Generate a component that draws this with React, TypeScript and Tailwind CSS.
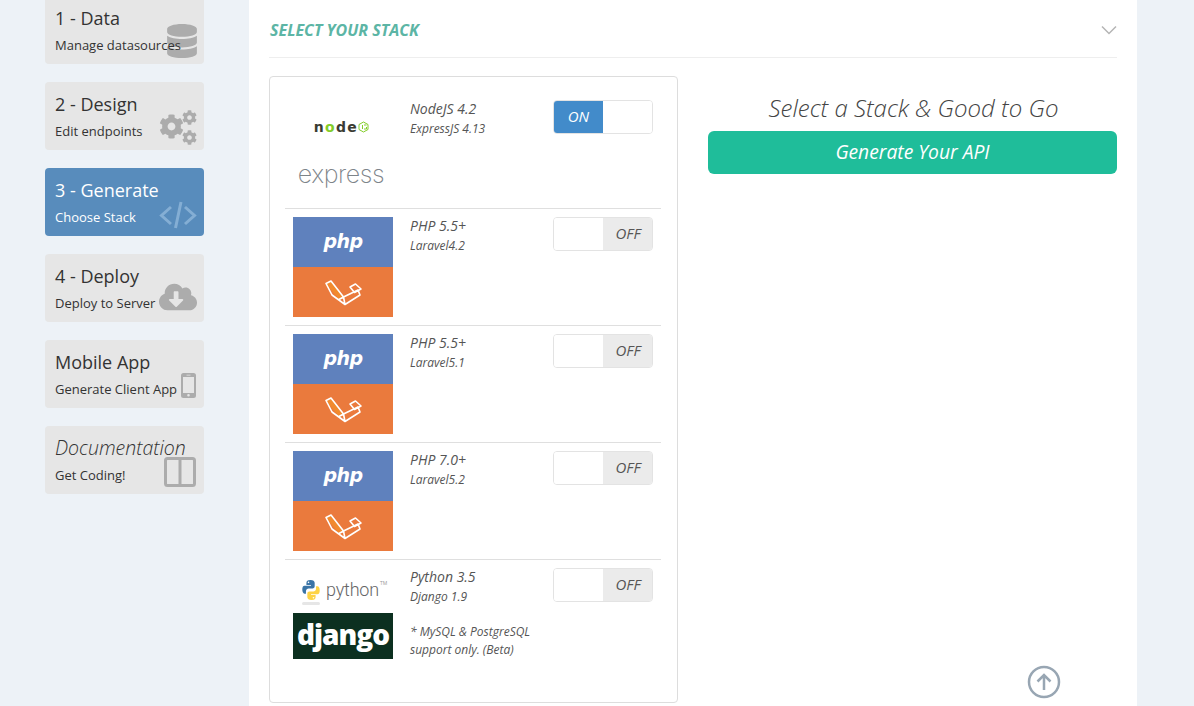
import type { ReactNode } from "react";
import { FaCloudDownloadAlt, FaCog, FaDatabase } from "react-icons/fa";

type NavItem = {
  title: string;
  subtitle: string;
  icon: ReactNode;
  iconClass: string;
  active?: boolean;
  italic?: boolean;
};

function CogsIcon() {
  return (
    <span className="relative block h-[35px] w-[38px]">
      <FaCog size={25} className="absolute left-0 top-[4px]" />
      <FaCog size={15} className="absolute right-0 top-0" />
      <FaCog size={15} className="absolute bottom-0 right-0" />
    </span>
  );
}

function CodeIcon() {
  return (
    <svg width="38" height="28" viewBox="0 0 38 28" fill="none" stroke="currentColor" strokeWidth="3">
      <path d="M12 6 2.500 14.500 12 23M26 6l9.500 8.500L26 23M22 1l-5.500 26" />
    </svg>
  );
}

function MobileIcon() {
  return (
    <svg width="15" height="25" viewBox="0 0 15 25">
      <path
        fillRule="evenodd"
        fill="currentColor"
        d="M2.500 0h10A2.500 2.500 0 0 1 15 2.500v20a2.500 2.500 0 0 1-2.500 2.500h-10A2.500 2.500 0 0 1 0 22.500v-20A2.500 2.500 0 0 1 2.500 0zM2 4v16h11V4zM7.500 21a1.300 1.300 0 1 0 0 2.600 1.300 1.300 0 0 0 0-2.600zM5.500 1.700v.8h4v-.8z"
      />
    </svg>
  );
}

function ColumnsIcon() {
  return (
    <svg width="32" height="30" viewBox="0 0 32 30" fill="none" stroke="currentColor" strokeWidth="3">
      <rect x="1.500" y="1.500" width="29" height="27" rx="2" />
      <path d="M16 2v26" />
    </svg>
  );
}

const navItems: NavItem[] = [
  {
    title: "1 - Data",
    subtitle: "Manage datasources",
    icon: <FaDatabase size={34} />,
    iconClass: "right-[5px] bottom-[6px]",
  },
  { title: "2 - Design", subtitle: "Edit endpoints", icon: <CogsIcon />, iconClass: "right-[7px] bottom-[5px]" },
  {
    title: "3 - Generate",
    subtitle: "Choose Stack",
    icon: <CodeIcon />,
    iconClass: "right-[7px] bottom-[7px]",
    active: true,
  },
  {
    title: "4 - Deploy",
    subtitle: "Deploy to Server",
    icon: <FaCloudDownloadAlt size={38} />,
    iconClass: "right-[7px] bottom-[6px]",
  },
  {
    title: "Mobile App",
    subtitle: "Generate Client App",
    icon: <MobileIcon />,
    iconClass: "right-[8px] bottom-[10px]",
  },
  {
    title: "Documentation",
    subtitle: "Get Coding!",
    icon: <ColumnsIcon />,
    iconClass: "right-[8px] bottom-[7px]",
    italic: true,
  },
];

function NavCard({ title, subtitle, icon, iconClass, active, italic }: NavItem) {
  return (
    <div
      className={`relative h-[68px] rounded-[4px] px-2.5 pt-[9px] ${
        active ? "bg-[#588cbc] text-white" : "bg-[#e6e6e6] text-[#333]"
      }`}
    >
      <span className={`absolute flex ${iconClass} ${active ? "text-[#84aed4]" : "text-[#acacac]"}`}>{icon}</span>
      <p className={`relative leading-[26px] ${italic ? "text-[19.500px] font-light italic" : "text-[18px]"}`}>
        {title}
      </p>
      <p className="relative mt-[4px] text-[13px] leading-[20px]">{subtitle}</p>
    </div>
  );
}

function Toggle({ on }: { on?: boolean }) {
  return (
    <div className="flex h-[34px] w-[100px] shrink-0 overflow-hidden rounded-[4px] border border-[#e3e3e3] text-[15px] italic leading-[30px]">
      {on ? (
        <>
          <span className="w-[49px] bg-[#428bca] text-center font-medium text-white">ON</span>
          <span className="flex-1 bg-white" />
        </>
      ) : (
        <>
          <span className="w-[49px] bg-white" />
          <span className="flex-1 bg-[#ebebeb] pl-px text-center text-[#555]">OFF</span>
        </>
      )}
    </div>
  );
}

function NodeExpressLogo() {
  return (
    <div className="h-[100px] w-[100px] bg-white">
      <div className="flex h-[50px] items-center justify-center pr-[3px] pt-[3px] font-['DejaVu_Sans',sans-serif] text-[14px] font-bold leading-none tracking-[1.300px] text-[#3b3b33]">
        n<span className="text-[#83cd29]">o</span>de
        <svg width="11" height="12" viewBox="0 0 11 12" fill="none" stroke="#83cd29">
          <path d="M5.500 1 10 3.500v5L5.500 11 1 8.500v-5zM4.500 4v4M6 4h2.500M6 8h2.500V6" />
        </svg>
      </div>
      <div className="flex h-[50px] items-center justify-center pb-[2px] pr-[4px] font-['Inter',sans-serif] text-[25px] font-extralight leading-none tracking-[-0.400px] text-[#7d8489]">
        express
      </div>
    </div>
  );
}

function LaravelMark() {
  return (
    <svg width="46" height="36" viewBox="0 0 46 36" fill="none" stroke="#fff" strokeWidth="1.600" strokeLinejoin="round">
      <path d="M6 8.500 11 6 23.500 22 19 24.500z" fill="#f18a2e" stroke="none" />
      <path d="M6 8.500 11 6 23.500 22 38 15 40 20 25 29.500 12 20zM23.500 22 25 29.500M19 24.500 23.500 22" />
      <path d="M30 12 35.500 9 41 14 34.500 17.500z" />
    </svg>
  );
}

function PhpLaravelLogo() {
  return (
    <div className="h-[100px] w-[100px]">
      <div className="flex h-[50px] items-center justify-center bg-[#5f81bd] pb-[2px] font-['DejaVu_Sans',sans-serif] text-[19px] font-bold italic leading-none tracking-[-0.500px] text-white">
        php
      </div>
      <div className="flex h-[50px] items-center justify-center bg-[#ea7a3d] pt-[2px]">
        <LaravelMark />
      </div>
    </div>
  );
}

function PythonDjangoLogo() {
  return (
    <div className="w-[100px]">
      <div className="flex h-[45px] items-center bg-white pl-[8px] pt-[2px]">
        <span className="flex flex-col items-center">
          <svg width="20" height="22" viewBox="0 0 20 24">
            <path
              d="M9.500 1C6 1 5 2.400 5 4v2.500h5v.900H3C1.200 7.400.5 9.200.5 11.500S1.300 16 3 16h1.500v-2.600c0-1.600 1.400-3 3-3h4.200c1.300 0 2.300-1 2.300-2.400V4c0-1.600-1.600-3-4.500-3z"
              fill="#3a74a6"
            />
            <path
              d="M10.500 23c3.500 0 4.500-1.400 4.500-3v-2.500h-5v-.9h7c1.800 0 2.500-1.800 2.500-4.100S18.700 8 17 8h-1.500v2.600c0 1.600-1.400 3-3 3H8.300C7 13.600 6 14.600 6 16v4c0 1.600 1.600 3 4.500 3z"
              fill="#fdd345"
            />
            <circle cx="7.300" cy="3.600" r="0.900" fill="#fff" />
            <circle cx="12.700" cy="20.400" r="0.900" fill="#fff" />
          </svg>
          <span className="mt-[1px] h-[3px] w-[18px] rounded-full bg-[#e6e6e6]" />
        </span>
        <span className="ml-[5px] mb-[3px] font-['Roboto',sans-serif] text-[18px] font-light leading-none tracking-[-0.200px] text-[#666]">
          python
        </span>
        <span className="mb-[16px] ml-[1px] text-[5px] leading-none text-[#999]">TM</span>
      </div>
      <div className="flex h-[46px] items-center justify-center bg-[#0c3020] pb-[4px] font-['Open_Sans',sans-serif] text-[28px] font-extrabold leading-none tracking-[-1px] text-white">
        django
      </div>
    </div>
  );
}

type StackRow = {
  name: string;
  framework: string;
  logo: ReactNode;
  on?: boolean;
  note?: boolean;
};

const stackRows: StackRow[] = [
  { name: "NodeJS 4.2", framework: "ExpressJS 4.13", logo: <NodeExpressLogo />, on: true },
  { name: "PHP 5.5+", framework: "Laravel4.2", logo: <PhpLaravelLogo /> },
  { name: "PHP 5.5+", framework: "Laravel5.1", logo: <PhpLaravelLogo /> },
  { name: "PHP 7.0+", framework: "Laravel5.2", logo: <PhpLaravelLogo /> },
  { name: "Python 3.5", framework: "Django 1.9", logo: <PythonDjangoLogo />, note: true },
];

function StackOption({ name, framework, logo, on, note }: StackRow) {
  return (
    <div className="flex h-[117px] border-b border-[#dfdfdf] pl-2 pr-2 pt-2 last:border-b-0">
      <div className="w-[100px] shrink-0">{logo}</div>
      <div className="ml-[17px] w-[143px] shrink-0 italic text-[#555]">
        <p className="text-[14px] leading-[18px]">{name}</p>
        <p className="mt-[2px] text-[12px] leading-[18px]">{framework}</p>
        {note && (
          <p className="mt-[17px] w-[135px] text-[12px] leading-[18px]">* MySQL &amp; PostgreSQL support only. (Beta)</p>
        )}
      </div>
      <Toggle on={on} />
    </div>
  );
}

export default function App() {
  return (
    <div className="relative flex h-[706px] w-[1194px] overflow-hidden bg-[#edf2f7] font-['Open_Sans',sans-serif]">
      <aside className="ml-[45px] mt-[-4px] flex w-[159px] shrink-0 flex-col gap-[18px]">
        {navItems.map((item) => (
          <NavCard key={item.title} {...item} />
        ))}
      </aside>

      <main className="ml-[45px] h-[760px] w-[888px] shrink-0 bg-white px-5">
        <div className="flex h-[58px] items-center justify-between border-b border-[#eeeeee] pl-px pt-[2px]">
          <h2 className="text-[16px] font-bold italic text-[#5cb5a5]">SELECT YOUR STACK</h2>
          <svg width="16" height="10" viewBox="0 0 16 10" fill="none" stroke="#b5b5b5" strokeWidth="1.500">
            <path d="M1 1.500 8 8.500l7-7" />
          </svg>
        </div>

        <div className="mt-[18px] flex gap-[30px]">
          <section className="h-[627px] w-[409px] shrink-0 rounded-[4px] border border-[#dddddd] pl-[15px] pr-[16px] pt-[15px]">
            {stackRows.map((row) => (
              <StackOption key={row.framework} {...row} />
            ))}
          </section>

          <section className="w-[409px]">
            <p className="mt-[16px] pl-[2px] text-center text-[24px] font-light italic leading-[32px] text-[#444]">
              Select a Stack &amp; Good to Go
            </p>
            <button
              type="button"
              className="mt-[7px] h-[43px] w-full rounded-[6px] bg-[#1fbd9a] text-[19.300px] italic text-white"
            >
              Generate Your API
            </button>
          </section>
        </div>
      </main>

      <svg
        className="absolute left-[1027px] top-[665px]"
        width="34"
        height="34"
        viewBox="0 0 34 34"
        fill="none"
        stroke="#98a6b3"
        strokeWidth="2.500"
      >
        <circle cx="17" cy="17" r="15" />
        <path d="M17 25V10M10.500 16.500 17 10l6.500 6.500" />
      </svg>
    </div>
  );
}
